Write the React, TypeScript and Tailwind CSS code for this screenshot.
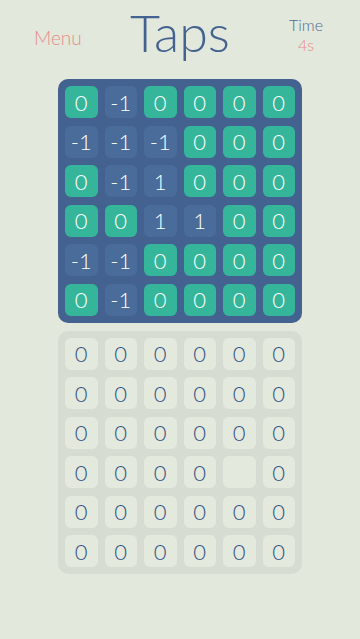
const top: number[][] = [
  [0, -1, 0, 0, 0, 0],
  [-1, -1, -1, 0, 0, 0],
  [0, -1, 1, 0, 0, 0],
  [0, 0, 1, 1, 0, 0],
  [-1, -1, 0, 0, 0, 0],
  [0, -1, 0, 0, 0, 0],
];

const bottom: (number | null)[][] = [
  [0, 0, 0, 0, 0, 0],
  [0, 0, 0, 0, 0, 0],
  [0, 0, 0, 0, 0, 0],
  [0, 0, 0, 0, null, 0],
  [0, 0, 0, 0, 0, 0],
  [0, 0, 0, 0, 0, 0],
];

export default function App() {
  return (
    <div
      className="w-[360px] h-[639px] bg-[#e3e8dc] flex flex-col"
      style={{ fontFamily: "Lato, 'Open Sans', sans-serif" }}
    >
      {/* Header */}
      <div className="grid grid-cols-3 h-[79px]">
        <div className="pl-[34px] pt-[24px] text-[19px] font-light text-[#e88b8b]">Menu</div>
        <div className="text-center text-[52px] leading-none pt-[6px] font-light text-[#43628f]">Taps</div>
        <div className="flex flex-col items-center pl-[12px] pt-[15px] text-[16px] leading-[20px] font-light">
          <span className="text-[#4d6a96]">Time</span>
          <span className="text-[#e88b8b]">4s</span>
        </div>
      </div>

      {/* Target board */}
      <div className="mx-auto w-[244px] rounded-[10px] bg-[#43628f] p-[7px] grid grid-cols-6 gap-x-[7px] gap-y-[7.5px]">
        {top.flat().map((v, i) => (
          <div
            key={i}
            className={`h-[32px] rounded-[6px] flex items-center justify-center text-[22px] font-light text-white ${
              v === 0 ? "bg-[#35b69a]" : "bg-[#4a6c9b]"
            }`}
          >
            {v}
          </div>
        ))}
      </div>

      {/* Player board */}
      <div className="mx-auto mt-[8px] w-[244px] rounded-[10px] bg-[#d6dcd1] p-[7px] grid grid-cols-6 gap-x-[7px] gap-y-[7.5px]">
        {bottom.flat().map((v, i) => (
          <div
            key={i}
            className="h-[32px] rounded-[6px] bg-[#e4e9de] flex items-center justify-center text-[22px] font-light text-[#2f5384]"
          >
            {v === null ? "" : v}
          </div>
        ))}
      </div>
    </div>
  );
}
